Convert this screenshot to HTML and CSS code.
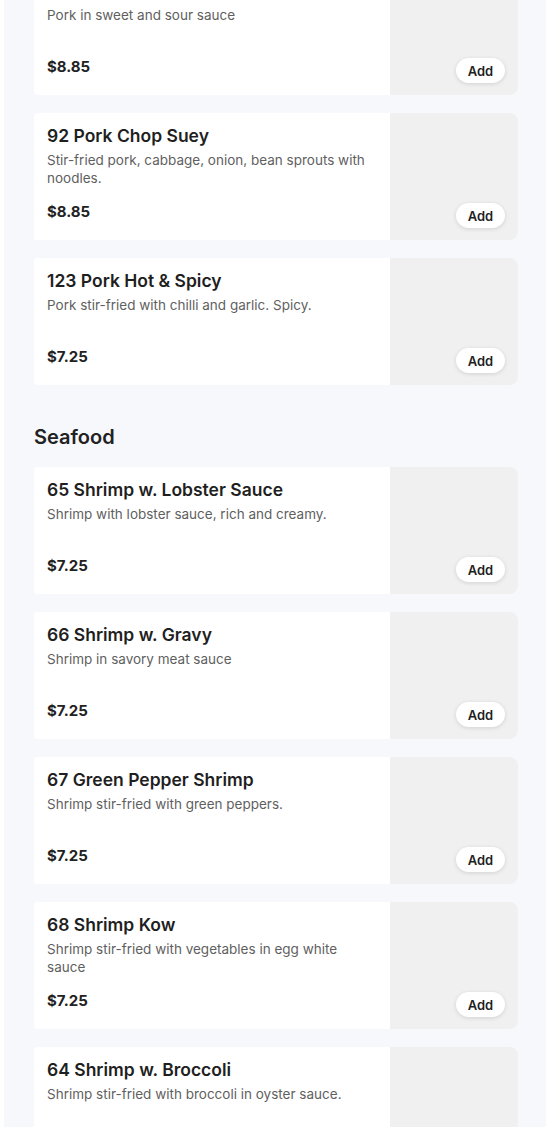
FILE: index.html
```html
<!DOCTYPE html>
<html lang="en">
<head>
<meta charset="utf-8">
<title>Menu</title>
<link rel="stylesheet" href="styles.css">
</head>
<body>
<main class="menu">
  <section class="section">
    <div class="cards">
      <article class="card">
        <div class="info">
          <h3 class="name">91 Sweet &amp; Sour Pork</h3>
          <p class="desc">Pork in sweet and sour sauce</p>
          <p class="price">$8.85</p>
        </div>
        <div class="pic"><button class="add">Add</button></div>
      </article>
      <article class="card">
        <div class="info">
          <h3 class="name">92 Pork Chop Suey</h3>
          <p class="desc">Stir-fried pork, cabbage, onion, bean sprouts with noodles.</p>
          <p class="price">$8.85</p>
        </div>
        <div class="pic"><button class="add">Add</button></div>
      </article>
      <article class="card">
        <div class="info">
          <h3 class="name">123 Pork Hot &amp; Spicy</h3>
          <p class="desc">Pork stir-fried with chilli and garlic. Spicy.</p>
          <p class="price">$7.25</p>
        </div>
        <div class="pic"><button class="add">Add</button></div>
      </article>
    </div>
  </section>

  <section class="section">
    <h2 class="section-title">Seafood</h2>
    <div class="cards">
      <article class="card">
        <div class="info">
          <h3 class="name">65 Shrimp w. Lobster Sauce</h3>
          <p class="desc">Shrimp with lobster sauce, rich and creamy.</p>
          <p class="price">$7.25</p>
        </div>
        <div class="pic"><button class="add">Add</button></div>
      </article>
      <article class="card">
        <div class="info">
          <h3 class="name">66 Shrimp w. Gravy</h3>
          <p class="desc">Shrimp in savory meat sauce</p>
          <p class="price">$7.25</p>
        </div>
        <div class="pic"><button class="add">Add</button></div>
      </article>
      <article class="card">
        <div class="info">
          <h3 class="name">67 Green Pepper Shrimp</h3>
          <p class="desc">Shrimp stir-fried with green peppers.</p>
          <p class="price">$7.25</p>
        </div>
        <div class="pic"><button class="add">Add</button></div>
      </article>
      <article class="card">
        <div class="info">
          <h3 class="name">68 Shrimp Kow</h3>
          <p class="desc">Shrimp stir-fried with vegetables in egg white sauce</p>
          <p class="price">$7.25</p>
        </div>
        <div class="pic"><button class="add">Add</button></div>
      </article>
      <article class="card">
        <div class="info">
          <h3 class="name">64 Shrimp w. Broccoli</h3>
          <p class="desc">Shrimp stir-fried with broccoli in oyster sauce.</p>
          <p class="price">$7.25</p>
        </div>
        <div class="pic"><button class="add">Add</button></div>
      </article>
    </div>
  </section>
</main>
</body>
</html>
```
FILE: styles.css
```css
* { box-sizing: border-box; }

html, body {
  margin: 0;
  padding: 0;
  background: #ffffff;
}

body {
  font-family: "Inter", "Noto Sans", "Liberation Sans", sans-serif;
  color: #1e1e1e;
}

.menu {
  margin: -32px 4px 0;
  padding: 0 28px 40px 30px;
  background: #f7f8fb;
  min-height: 1200px;
}

.section-title {
  margin: 0 0 16px;
  padding-top: 38px;
  font-size: 20px;
  line-height: 28px;
  font-weight: 600;
  color: #222;
}

.cards {
  display: flex;
  flex-direction: column;
  gap: 18px;
}

.card {
  display: flex;
  height: 127px;
  background: #ffffff;
  border-radius: 3px 8px 8px 3px;
}

.info {
  flex: 1;
  min-width: 0;
  display: flex;
  flex-direction: column;
  padding: 12px 13px 18px;
}

.name {
  margin: 0;
  font-size: 17.5px;
  line-height: 22px;
  font-weight: 600;
  color: #1f1f1f;
}

.desc {
  margin: 4px 0 0;
  font-size: 13.5px;
  line-height: 18px;
  color: #5f5f5f;
}

.price {
  margin: auto 0 0;
  font-size: 15px;
  line-height: 20px;
  font-weight: 700;
  color: #222;
}

.pic {
  position: relative;
  width: 128px;
  flex: none;
  background: #f0f0f0;
  border-radius: 0 8px 8px 0;
}

.add {
  position: absolute;
  right: 13px;
  bottom: 12px;
  height: 25px;
  width: 49px;
  padding: 0;
  border: none;
  border-radius: 13px;
  background: #ffffff;
  box-shadow: 0 1px 4px rgba(0, 0, 0, 0.13);
  font-family: inherit;
  font-size: 13px;
  font-weight: 600;
  color: #1f1f1f;
  cursor: pointer;
}
```
